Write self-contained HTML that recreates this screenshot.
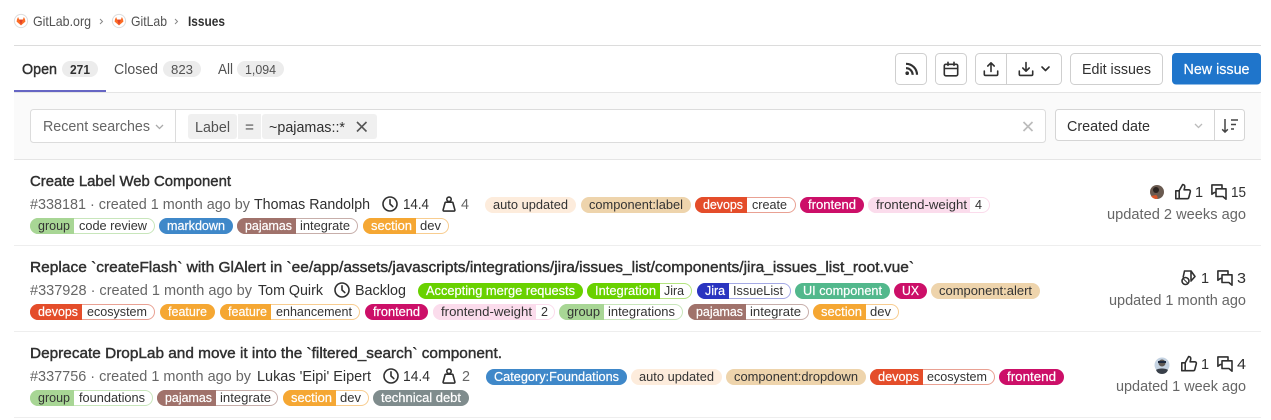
<!DOCTYPE html>
<html><head><meta charset="utf-8"><style>
html,body{margin:0;padding:0;background:#fff;width:1271px;height:420px;overflow:hidden}
svg{display:block}
text{font-family:"Liberation Sans",sans-serif;font-size:14.5px;fill:#303030}
.g{fill:#666}.m{fill:#525252}
.t{stroke:#303030;stroke-width:.42;font-size:14.5px}
.l{font-size:12.6px}.w{fill:#fff;stroke:#fff;stroke-width:.2}.d{fill:#333}
.i{fill:none;stroke:#303030;stroke-width:1.6;stroke-linejoin:round;stroke-linecap:round}
.b{fill:#fff;stroke:#cfcfcf}
</style></head><body>
<svg width="1271" height="420" viewBox="0 0 1271 420" xmlns="http://www.w3.org/2000/svg">
<defs>
<g id="fox"><circle cx="7" cy="7" r="6.6" fill="#fff" stroke="#ddd"/><path d="M3 5.2L4.1 3 5.2 5.6H8.8L9.9 3 11 5.2 11.4 7.6 7 11.4 2.6 7.6Z" fill="#fc6d26"/><path d="M5.2 5.6H8.8L7 11.4Z" fill="#e24329"/></g>
<g id="thumb" class="i"><path d="M.8 6.800h3.400v7.900H.8zM4.200 6.800L7.600.6c1.700 0 2.500 1.200 2.100 2.700L9.100 5.800h4.700c1.100 0 1.800.9 1.500 2l-1.500 5.700c-.2.800-.9 1.200-1.600 1.200H4.200"/></g>
<g id="cmt" class="i"><path d="M5 4.800h10v10.400l-3.100-2.700H5zM11 4.800V.9H.9v9.400l2.200-1.700H5"/></g>
<g id="clock" class="i"><circle cx="8" cy="8" r="7"/><path d="M8 3.800V8l2.800 2.600"/></g>
<g id="wt" class="i"><circle cx="8" cy="3.300" r="2.200"/><path d="M5 6.200h6c.5 0 .9.3 1 .8l1.900 7c.1.6-.3 1.100-.9 1.100H3c-.6 0-1-.5-.9-1.100L4 7c.1-.5.5-.8 1-.8z"/></g>
</defs>

<!-- breadcrumb -->
<use href="#fox" x="14" y="14"/>
<text x="33" y="26" class="m" style="font-size:13.6px" textLength="58" lengthAdjust="spacingAndGlyphs">GitLab.org</text>
<path d="M100 19l2.500 2.500L100 24" fill="none" stroke="#888" stroke-width="1"/>
<use href="#fox" x="112" y="14"/>
<text x="131" y="26" class="m" style="font-size:13.6px" textLength="36" lengthAdjust="spacingAndGlyphs">GitLab</text>
<path d="M175 19l2.500 2.500L175 24" fill="none" stroke="#888" stroke-width="1"/>
<text x="188" y="26" style="font-size:13.6px;font-weight:bold" textLength="37" lengthAdjust="spacingAndGlyphs">Issues</text>
<rect x="14" y="45" width="1247" height="1" fill="#dcdcdc"/>

<!-- tabs -->
<text x="22" y="74" class="t" textLength="35" lengthAdjust="spacingAndGlyphs">Open</text>
<rect x="62" y="61" width="36" height="16" rx="8" fill="#ececec"/>
<text x="70" y="74" class="l" style="font-weight:bold" textLength="20" lengthAdjust="spacingAndGlyphs">271</text>
<text x="114" y="74" class="m" textLength="44" lengthAdjust="spacingAndGlyphs">Closed</text>
<rect x="163" y="61" width="38" height="16" rx="8" fill="#ececec"/>
<text x="171" y="74" class="l m" textLength="22" lengthAdjust="spacingAndGlyphs">823</text>
<text x="218" y="74" class="m" textLength="15" lengthAdjust="spacingAndGlyphs">All</text>
<rect x="237" y="61" width="47" height="16" rx="8" fill="#ececec"/>
<text x="245" y="74" class="l m" textLength="31" lengthAdjust="spacingAndGlyphs">1,094</text>
<rect x="14" y="92" width="1247" height="67" fill="#fafafa"/>
<rect x="14" y="92" width="1247" height="1" fill="#e5e5e5"/>
<rect x="14" y="159" width="1247" height="1" fill="#e5e5e5"/>
<rect x="14" y="90" width="92" height="2" fill="#6666c4"/>

<!-- action buttons -->
<rect class="b" x="895.500" y="53.500" width="31" height="31" rx="4"/>
<g transform="translate(905,62)"><circle cx="2.200" cy="11.200" r="1.800" fill="#303030"/><path d="M1 6.200a6.500 6.500 0 0 1 6.600 6.600M1 1.800a11 11 0 0 1 11 11" fill="none" stroke="#303030" stroke-width="2.200"/></g>
<rect class="b" x="935.500" y="53.500" width="31" height="31" rx="4"/>
<g transform="translate(943,61)" class="i"><rect x="1.300" y="3.300" width="13.400" height="11.500" rx="1.500"/><path d="M1.300 7.500h13.400M5 1.300v3M11 1.300v3"/></g>
<rect class="b" x="975.500" y="53.500" width="86" height="31" rx="4"/>
<path d="M1006.500 54v30" stroke="#cfcfcf"/>
<g transform="translate(983,61)" class="i"><path d="M8 10.500V2M4.800 5L8 1.800 11.200 5M1.300 10v3.200c0 .7.500 1.200 1.200 1.200h11c.7 0 1.200-.500 1.200-1.200V10"/></g>
<g transform="translate(1018,61)" class="i"><path d="M8 1.500V10M4.800 7L8 10.200 11.200 7M1.300 10v3.200c0 .7.500 1.200 1.200 1.200h11c.7 0 1.200-.500 1.200-1.200V10"/></g>
<path d="M1042 67l3.500 3.500 3.500-3.500" class="i"/>
<rect class="b" x="1070.500" y="53.500" width="92" height="31" rx="4"/>
<text x="1082" y="74" textLength="69" lengthAdjust="spacingAndGlyphs">Edit issues</text>
<rect x="1172" y="53" width="89" height="31.500" rx="4" fill="#1f75cb"/>
<text x="1183.500" y="74" style="fill:#fff;stroke:#fff;stroke-width:.2" textLength="66" lengthAdjust="spacingAndGlyphs">New issue</text>

<!-- search -->
<rect x="30.500" y="109.500" width="1015" height="33" rx="3" fill="#fff" stroke="#dcdcdc"/>
<path d="M175.500 110v32" stroke="#dcdcdc"/>
<text x="43" y="131" class="g" textLength="107" lengthAdjust="spacingAndGlyphs">Recent searches</text>
<path d="M156 125l3.500 3.500 3.500-3.500" fill="none" stroke="#aaa" stroke-width="1.300"/>
<rect x="188" y="114" width="49" height="25" rx="3" fill="#f0f0f0"/>
<rect x="238" y="114" width="23" height="25" fill="#f0f0f0"/>
<rect x="262" y="114" width="115" height="25" rx="3" fill="#f0f0f0"/>
<text x="195" y="132" class="m" textLength="35" lengthAdjust="spacingAndGlyphs">Label</text>
<text x="245" y="132" class="m" textLength="9" lengthAdjust="spacingAndGlyphs">=</text>
<text x="269" y="132" textLength="76" lengthAdjust="spacingAndGlyphs">~pajamas::*</text>
<path d="M357 122l9.500 9.500M366.500 122l-9.500 9.500" stroke="#555" stroke-width="1.600" fill="none"/>
<path d="M1023.500 122l9 9M1032.500 122l-9 9" stroke="#bbb" stroke-width="1.700" fill="none"/>

<rect x="1055.500" y="109.500" width="189" height="31" rx="3" fill="#fff" stroke="#d5d5d5"/>
<path d="M1214.500 110v30" stroke="#d5d5d5"/>
<text x="1067" y="131" textLength="83" lengthAdjust="spacingAndGlyphs">Created date</text>
<path d="M1195 124l3.500 3.500 3.500-3.500" fill="none" stroke="#bbb" stroke-width="1.300"/>
<path d="M1225 119v13M1222.200 129.300l2.800 2.800 2.800-2.800M1231 120h7M1231 124.500h5M1231 129h3" fill="none" stroke="#444" stroke-width="1.500"/>

<!-- row 1 -->
<text x="30" y="186" class="t" textLength="201" lengthAdjust="spacingAndGlyphs">Create Label Web Component</text>
<text x="30" y="209" class="g" textLength="220" lengthAdjust="spacingAndGlyphs">#338181 · created 1 month ago by</text>
<text x="254" y="209" textLength="116" lengthAdjust="spacingAndGlyphs">Thomas Randolph</text>
<use href="#clock" x="382" y="196"/>
<text x="403" y="209" textLength="26" lengthAdjust="spacingAndGlyphs">14.4</text>
<use href="#wt" x="441" y="196"/>
<text x="461" y="209" class="g" textLength="8" lengthAdjust="spacingAndGlyphs">4</text>

<rect x="485" y="197" width="91" height="16" rx="8" fill="#fdecdc"/><text x="493" y="209" class="l d" textLength="75" lengthAdjust="spacingAndGlyphs">auto updated</text>
<rect x="581" y="197" width="110" height="16" rx="8" fill="#eed4ac"/><text x="589" y="209" class="l d" textLength="94" lengthAdjust="spacingAndGlyphs">component:label</text>
<rect x="695.500" y="197.500" width="100" height="15" rx="7.500" fill="#fff" stroke="#e9a193"/><path d="M703 197H747V213H703a8 8 0 0 1 0-16z" fill="#e44d2a"/><text x="703" y="209" class="l w" textLength="40" lengthAdjust="spacingAndGlyphs">devops</text><text x="752" y="209" class="l d" textLength="35" lengthAdjust="spacingAndGlyphs">create</text>
<rect x="800" y="197" width="64" height="16" rx="8" fill="#cc0f68"/><text x="808" y="209" class="l w" textLength="48" lengthAdjust="spacingAndGlyphs">frontend</text>
<rect x="868.500" y="197.500" width="121" height="15" rx="7.500" fill="#fff" stroke="#fbdcec"/><path d="M876 197H970V213H876a8 8 0 0 1 0-16z" fill="#fbdcec"/><text x="876" y="209" class="l d" textLength="91" lengthAdjust="spacingAndGlyphs">frontend-weight</text><text x="975" y="209" class="l d" textLength="7" lengthAdjust="spacingAndGlyphs">4</text>

<rect x="30.500" y="218.500" width="124" height="15" rx="7.500" fill="#fff" stroke="#c8e6bb"/><path d="M38 218H74V234H38a8 8 0 0 1 0-16z" fill="#a8d695"/><text x="38" y="230" class="l d" textLength="32" lengthAdjust="spacingAndGlyphs">group</text><text x="79" y="230" class="l d" textLength="68" lengthAdjust="spacingAndGlyphs">code review</text>
<rect x="159" y="218" width="74" height="16" rx="8" fill="#3f88c9"/><text x="167" y="230" class="l w" textLength="58" lengthAdjust="spacingAndGlyphs">markdown</text>
<rect x="237.500" y="218.500" width="120" height="15" rx="7.500" fill="#fff" stroke="#c7aeaa"/><path d="M245 218H296V234H245a8 8 0 0 1 0-16z" fill="#a0726b"/><text x="245" y="230" class="l w" textLength="47" lengthAdjust="spacingAndGlyphs">pajamas</text><text x="300" y="230" class="l d" textLength="50" lengthAdjust="spacingAndGlyphs">integrate</text>
<rect x="363.500" y="218.500" width="85" height="15" rx="7.500" fill="#fff" stroke="#f8cd90"/><path d="M371 218H416V234H371a8 8 0 0 1 0-16z" fill="#f5a733"/><text x="371" y="230" class="l w" textLength="41" lengthAdjust="spacingAndGlyphs">section</text><text x="420" y="230" class="l d" textLength="21" lengthAdjust="spacingAndGlyphs">dev</text>

<circle cx="1157" cy="192" r="7" fill="#6a5a50"/><circle cx="1156" cy="190" r="3" fill="#2b2320"/><path d="M1151 196a7 7 0 0 0 6 3c1 0 1-3-1-4z" fill="#d8562a"/>
<use href="#thumb" x="1175" y="184"/>
<text x="1195" y="197">1</text>
<use href="#cmt" x="1211" y="184"/>
<text x="1231" y="197" textLength="15" lengthAdjust="spacingAndGlyphs">15</text>
<text x="1107" y="219" class="g" textLength="139" lengthAdjust="spacingAndGlyphs">updated 2 weeks ago</text>
<rect x="14" y="245" width="1247" height="1" fill="#eee"/>

<!-- row 2 -->
<text x="30" y="272" class="t" textLength="884" lengthAdjust="spacingAndGlyphs">Replace `createFlash` with GlAlert in `ee/app/assets/javascripts/integrations/jira/issues_list/components/jira_issues_list_root.vue`</text>
<text x="30" y="295" class="g" textLength="222" lengthAdjust="spacingAndGlyphs">#337928 · created 1 month ago by</text>
<text x="258" y="295" textLength="65" lengthAdjust="spacingAndGlyphs">Tom Quirk</text>
<use href="#clock" x="334" y="282"/>
<text x="355" y="295" textLength="51" lengthAdjust="spacingAndGlyphs">Backlog</text>

<rect x="418" y="283" width="165" height="16" rx="8" fill="#69d100"/><text x="426" y="295" class="l w" textLength="149" lengthAdjust="spacingAndGlyphs">Accepting merge requests</text>
<rect x="587.500" y="283.500" width="104" height="15" rx="7.500" fill="#fff" stroke="#b4e580"/><path d="M595 283H660V299H595a8 8 0 0 1 0-16z" fill="#69d100"/><text x="595" y="295" class="l w" textLength="61" lengthAdjust="spacingAndGlyphs">Integration</text><text x="664" y="295" class="l d" textLength="20" lengthAdjust="spacingAndGlyphs">Jira</text>
<rect x="697.500" y="283.500" width="93" height="15" rx="7.500" fill="#fff" stroke="#a5aae6"/><path d="M705 283H729V299H705a8 8 0 0 1 0-16z" fill="#2a34c0"/><text x="705" y="295" class="l w" textLength="20" lengthAdjust="spacingAndGlyphs">Jira</text><text x="733" y="295" class="l d" textLength="50" lengthAdjust="spacingAndGlyphs">IssueList</text>
<rect x="795" y="283" width="95" height="16" rx="8" fill="#52b88c"/><text x="803" y="295" class="l w" textLength="79" lengthAdjust="spacingAndGlyphs">UI component</text>
<rect x="894" y="283" width="33" height="16" rx="8" fill="#cc0f68"/><text x="902" y="295" class="l w" textLength="17" lengthAdjust="spacingAndGlyphs">UX</text>
<rect x="931" y="283" width="109" height="16" rx="8" fill="#eed4ac"/><text x="939" y="295" class="l d" textLength="93" lengthAdjust="spacingAndGlyphs">component:alert</text>

<rect x="30.500" y="304.500" width="124" height="15" rx="7.500" fill="#fff" stroke="#e9a193"/><path d="M38 304H82V320H38a8 8 0 0 1 0-16z" fill="#e44d2a"/><text x="38" y="316" class="l w" textLength="40" lengthAdjust="spacingAndGlyphs">devops</text><text x="87" y="316" class="l d" textLength="60" lengthAdjust="spacingAndGlyphs">ecosystem</text>
<rect x="160" y="304" width="55" height="16" rx="8" fill="#f5a733"/><text x="168" y="316" class="l w" textLength="39" lengthAdjust="spacingAndGlyphs">feature</text>
<rect x="220.500" y="304.500" width="139" height="15" rx="7.500" fill="#fff" stroke="#f8cd90"/><path d="M228 304H271V320H228a8 8 0 0 1 0-16z" fill="#f5a733"/><text x="228" y="316" class="l w" textLength="39" lengthAdjust="spacingAndGlyphs">feature</text><text x="276" y="316" class="l d" textLength="76" lengthAdjust="spacingAndGlyphs">enhancement</text>
<rect x="365" y="304" width="63" height="16" rx="8" fill="#cc0f68"/><text x="373" y="316" class="l w" textLength="47" lengthAdjust="spacingAndGlyphs">frontend</text>
<rect x="433.500" y="304.500" width="121" height="15" rx="7.500" fill="#fff" stroke="#fbdcec"/><path d="M441 304H536V320H441a8 8 0 0 1 0-16z" fill="#fbdcec"/><text x="441" y="316" class="l d" textLength="91" lengthAdjust="spacingAndGlyphs">frontend-weight</text><text x="541" y="316" class="l d" textLength="7" lengthAdjust="spacingAndGlyphs">2</text>
<rect x="559.500" y="304.500" width="123" height="15" rx="7.500" fill="#fff" stroke="#c8e6bb"/><path d="M567 304H604V320H567a8 8 0 0 1 0-16z" fill="#a8d695"/><text x="567" y="316" class="l d" textLength="33" lengthAdjust="spacingAndGlyphs">group</text><text x="608" y="316" class="l d" textLength="67" lengthAdjust="spacingAndGlyphs">integrations</text>
<rect x="688.500" y="304.500" width="120" height="15" rx="7.500" fill="#fff" stroke="#c7aeaa"/><path d="M696 304H746V320H696a8 8 0 0 1 0-16z" fill="#a0726b"/><text x="696" y="316" class="l w" textLength="47" lengthAdjust="spacingAndGlyphs">pajamas</text><text x="750" y="316" class="l d" textLength="51" lengthAdjust="spacingAndGlyphs">integrate</text>
<rect x="813.500" y="304.500" width="85" height="15" rx="7.500" fill="#fff" stroke="#f8cd90"/><path d="M821 304H866V320H821a8 8 0 0 1 0-16z" fill="#f5a733"/><text x="821" y="316" class="l w" textLength="41" lengthAdjust="spacingAndGlyphs">section</text><text x="870" y="316" class="l d" textLength="21" lengthAdjust="spacingAndGlyphs">dev</text>

<g transform="translate(1181,270)"><path d="M3.500 1h6.500v9M10 1l4 5.500L10 11M3.500 1L2.200 7" class="i"/><circle cx="4.500" cy="11" r="3.500" fill="#fff" stroke="#303030" stroke-width="1.600"/><path d="M2.500 9l4 4" stroke="#303030"/></g>
<text x="1201" y="283">1</text>
<use href="#cmt" x="1217" y="270"/>
<text x="1237" y="283" textLength="9" lengthAdjust="spacingAndGlyphs">3</text>
<text x="1109" y="305" class="g" textLength="137" lengthAdjust="spacingAndGlyphs">updated 1 month ago</text>
<rect x="14" y="331" width="1247" height="1" fill="#eee"/>

<!-- row 3 -->
<text x="30" y="358" class="t" textLength="472" lengthAdjust="spacingAndGlyphs">Deprecate DropLab and move it into the `filtered_search` component.</text>
<text x="30" y="381" class="g" textLength="221" lengthAdjust="spacingAndGlyphs">#337756 · created 1 month ago by</text>
<text x="257" y="381" textLength="114" lengthAdjust="spacingAndGlyphs">Lukas 'Eipi' Eipert</text>
<use href="#clock" x="383" y="368"/>
<text x="403" y="381" textLength="27" lengthAdjust="spacingAndGlyphs">14.4</text>
<use href="#wt" x="441" y="368"/>
<text x="462" y="381" class="g" textLength="8" lengthAdjust="spacingAndGlyphs">2</text>

<rect x="486" y="369" width="141" height="16" rx="8" fill="#3f88c9"/><text x="494" y="381" class="l w" textLength="125" lengthAdjust="spacingAndGlyphs">Category:Foundations</text>
<rect x="631" y="369" width="91" height="16" rx="8" fill="#fdecdc"/><text x="639" y="381" class="l d" textLength="75" lengthAdjust="spacingAndGlyphs">auto updated</text>
<rect x="726" y="369" width="140" height="16" rx="8" fill="#eed4ac"/><text x="734" y="381" class="l d" textLength="124" lengthAdjust="spacingAndGlyphs">component:dropdown</text>
<rect x="870.500" y="369.500" width="124" height="15" rx="7.500" fill="#fff" stroke="#e9a193"/><path d="M878 369H923V385H878a8 8 0 0 1 0-16z" fill="#e44d2a"/><text x="878" y="381" class="l w" textLength="41" lengthAdjust="spacingAndGlyphs">devops</text><text x="927" y="381" class="l d" textLength="60" lengthAdjust="spacingAndGlyphs">ecosystem</text>
<rect x="999" y="369" width="65" height="16" rx="8" fill="#cc0f68"/><text x="1007" y="381" class="l w" textLength="49" lengthAdjust="spacingAndGlyphs">frontend</text>

<rect x="30.500" y="390.500" width="122" height="15" rx="7.500" fill="#fff" stroke="#c8e6bb"/><path d="M38 390H74V406H38a8 8 0 0 1 0-16z" fill="#a8d695"/><text x="38" y="402" class="l d" textLength="32" lengthAdjust="spacingAndGlyphs">group</text><text x="79" y="402" class="l d" textLength="66" lengthAdjust="spacingAndGlyphs">foundations</text>
<rect x="157.500" y="390.500" width="120" height="15" rx="7.500" fill="#fff" stroke="#c7aeaa"/><path d="M165 390H216V406H165a8 8 0 0 1 0-16z" fill="#a0726b"/><text x="165" y="402" class="l w" textLength="47" lengthAdjust="spacingAndGlyphs">pajamas</text><text x="220" y="402" class="l d" textLength="51" lengthAdjust="spacingAndGlyphs">integrate</text>
<rect x="283.500" y="390.500" width="85" height="15" rx="7.500" fill="#fff" stroke="#f8cd90"/><path d="M291 390H336V406H291a8 8 0 0 1 0-16z" fill="#f5a733"/><text x="291" y="402" class="l w" textLength="41" lengthAdjust="spacingAndGlyphs">section</text><text x="340" y="402" class="l d" textLength="21" lengthAdjust="spacingAndGlyphs">dev</text>
<rect x="373" y="390" width="96" height="16" rx="8" fill="#7f8c8d"/><text x="381" y="402" class="l w" textLength="80" lengthAdjust="spacingAndGlyphs">technical debt</text>

<circle cx="1162" cy="365" r="7.500" fill="#c5d3e2"/><circle cx="1162" cy="363" r="3.500" fill="#5f5a55"/><path d="M1156 370a6.500 6.500 0 0 0 12 0c-2-2-10-2-12 0z" fill="#39404a"/><path d="M1158 361h8v2h-8z" fill="#1d2a40"/>
<use href="#thumb" x="1181" y="356"/>
<text x="1201" y="369">1</text>
<use href="#cmt" x="1217" y="356"/>
<text x="1237" y="369" textLength="9" lengthAdjust="spacingAndGlyphs">4</text>
<text x="1116" y="391" class="g" textLength="130" lengthAdjust="spacingAndGlyphs">updated 1 week ago</text>
<rect x="14" y="417" width="1247" height="1" fill="#eee"/>
</svg>
</body></html>
